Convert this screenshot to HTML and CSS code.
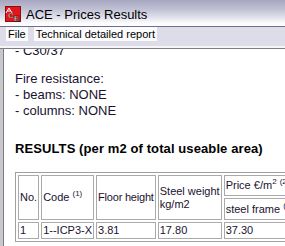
FILE: index.html
```html
<!DOCTYPE html>
<html>
<head>
<meta charset="utf-8">
<link rel="stylesheet" href="styles.css">
</head>
<body>
<div class="window">
  <div class="titlebar">
    <svg class="app-icon" width="16" height="16" viewBox="0 0 16 16">
      <rect x="0" y="0" width="16" height="16" fill="#e4161c"/>
      <rect x="0.5" y="0.5" width="15" height="15" fill="none" stroke="#8a1010" stroke-width="1"/>
      <path d="M1 7 L4 2 L7 7 M2.5 5 H5.5" fill="none" stroke="#fff" stroke-width="1"/>
      <text x="3" y="12" font-family="Liberation Sans, sans-serif" font-size="8" font-weight="bold" fill="#fff" stroke="#000" stroke-width="0.4">C</text>
      <text x="9" y="15" font-family="Liberation Sans, sans-serif" font-size="8" font-weight="bold" fill="#fff" stroke="#000" stroke-width="0.4">E</text>
    </svg>
    <span class="title">ACE - Prices Results</span>
  </div>
  <div class="menubar">
    <span class="menu-item">File</span>
    <span class="menu-item">Technical detailed report</span>
  </div>
  <div class="sep"></div>
  <div class="content">
    <div class="scroll">
      <p class="line first">- C30/37</p>
      <p class="line gap">Fire resistance:</p>
      <p class="line">- beams: NONE</p>
      <p class="line">- columns: NONE</p>
      <h2 class="results-title">RESULTS (per m2 of total useable area)</h2>
      <table class="results">
        <tr class="r1">
          <td rowspan="2" class="c-no">No.</td>
          <td rowspan="2" class="c-code">Code <sup>(1)</sup></td>
          <td rowspan="2" class="c-floor">Floor height</td>
          <td rowspan="2" class="c-steel">Steel weight<br>kg/m2</td>
          <td colspan="2" class="c-price">Price €/m<sup>2</sup> <sup>(2)</sup></td>
        </tr>
        <tr class="r2">
          <td class="c-frame">steel frame <sup>(3)</sup></td>
          <td class="c-total">total</td>
        </tr>
        <tr class="r3">
          <td>1</td>
          <td>1--ICP3-X</td>
          <td>3.81</td>
          <td>17.80</td>
          <td>37.30</td>
          <td>52.10</td>
        </tr>
      </table>
    </div>
  </div>
</div>
</body>
</html>
```
FILE: styles.css
```css
html, body {
  margin: 0;
  padding: 0;
  width: 285px;
  height: 246px;
  overflow: hidden;
  background: #ffffff;
}

.window {
  width: 285px;
  height: 246px;
  display: flex;
  flex-direction: column;
  overflow: hidden;
  font-family: "Liberation Sans", Arial, sans-serif;
}

.titlebar {
  flex: none;
  display: flex;
  align-items: center;
  gap: 5px;
  padding-left: 5px;
  box-sizing: border-box;
  background: linear-gradient(to bottom, #a6a6c0 0%, #c0c0d4 35%, #e4e4ee 70%, #fbfbfd 88%, #ffffff 100%);
  border-bottom: 1px solid #6e6e8e;
  height: 27px;
}

.app-icon {
  flex: none;
  margin-top: 1px;
}

.title {
  font-size: 13px;
  color: #000;
  margin-top: 2px;
}

.menubar {
  height: 19px;
  flex: none;
  display: flex;
  align-items: flex-start;
  gap: 6px;
  padding-left: 6px;
  box-sizing: border-box;
  background: #dcdde8;
}

.menu-item {
  font-size: 11px;
  line-height: 14px;
  padding: 0 2px;
  background: #fbfbfc;
  color: #000;
}

.sep {
  flex: none;
  height: 2px;
  background: #f6f6f8;
  border-bottom: 1px solid #7c7c84;
}

.content {
  flex: 1;
  overflow: hidden;
  border-left: 3px solid #c8c8cc;
  position: relative;
}

.content::before {
  content: "";
  display: block;
  position: absolute;
  left: 0;
  top: 0;
  bottom: 0;
  width: 1px;
  background: #7c7c84;
}

.scroll {
  padding-left: 12px;
  margin-top: -6px;
  color: #1a1230;
}

.line {
  margin: 0;
  font-size: 13px;
  line-height: 16px;
  white-space: nowrap;
}

.line.gap {
  margin-top: 12px;
}

.results-title {
  margin: 22px 0 0 0;
  font-size: 13px;
  line-height: 16px;
  font-weight: bold;
  letter-spacing: 0.1px;
  white-space: nowrap;
  color: #000;
}

.results {
  margin-top: 15px;
  border: 1px solid #a0a0a0;
  border-spacing: 2px;
  font-size: 11px;
  line-height: 13px;
  color: #1a1230;
}

.results td {
  border: 1px solid #aaaaaa;
  padding: 1px;
  white-space: nowrap;
  text-align: left;
  vertical-align: middle;
}

.results sup {
  font-size: 8px;
  line-height: 0;
  vertical-align: 5px;
}

.c-no { width: 16px; }
.c-code { width: 49px; }
.c-floor { width: 55px; letter-spacing: -0.2px; }
.c-steel { width: 60px; }
.r1 td.c-price { height: 17px; }
.r2 td { height: 18px; }
.c-frame { width: 70px; }
.c-total { width: 50px; }
```
